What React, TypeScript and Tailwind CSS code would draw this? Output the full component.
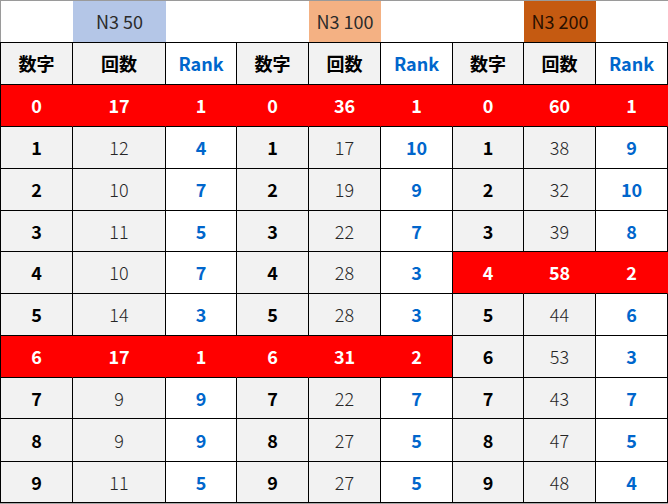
const font = { fontFamily: '"Noto Sans CJK JP", "Noto Sans", sans-serif' }

// 列幅（右罫線込み）
const colWidths = ['w-[72px]', 'w-[93px]', 'w-[71px]', 'w-[72px]', 'w-[72px]', 'w-[72px]', 'w-[71px]', 'w-[72px]', 'w-[72px]']
// 行の高さ（下罫線込み）
const rowHeights = ['h-[42px]', 'h-[42px]', 'h-[42px]', 'h-[41px]', 'h-[42px]', 'h-[42px]', 'h-[42px]', 'h-[41px]', 'h-[43px]', 'h-[41px]']

const sections = [
  {
    counts: [17, 12, 10, 11, 10, 14, 17, 9, 9, 11],
    ranks: [1, 4, 7, 5, 7, 3, 1, 9, 9, 5],
    red: [0, 6],
  },
  {
    counts: [36, 17, 19, 22, 28, 28, 31, 22, 27, 27],
    ranks: [1, 10, 9, 7, 3, 3, 2, 7, 5, 5],
    red: [0, 6],
  },
  {
    counts: [60, 38, 32, 39, 58, 44, 53, 43, 47, 48],
    ranks: [1, 9, 10, 8, 2, 6, 3, 7, 5, 4],
    red: [0, 4],
  },
]

function isRed(row: number, col: number) {
  if (col > 8) return false
  return sections[Math.floor(col / 3)].red.includes(row)
}

export default function App() {
  return (
    <div className="w-[668px] h-[504px] bg-[#a6a6a6] text-[18px]" style={font}>
      {/* タイトル行 */}
      <div className="flex h-[42px] bg-white border-t border-l border-[#9a9a9a]">
        <div className="w-[72px]" />
        <div className="w-[93px] bg-[#b4c6e7] flex items-center justify-center text-[18px] text-[#2b2b2b]">N3 50</div>
        <div className="w-[71px]" />
        <div className="w-[72px]" />
        <div className="w-[72px] bg-[#f4b183] flex items-center justify-center text-[18px] text-[#2b2b2b]">N3 100</div>
        <div className="w-[72px]" />
        <div className="w-[71px]" />
        <div className="w-[72px] bg-[#c55a11] flex items-center justify-center text-[18px] text-[#2a1000]">N3 200</div>
        <div className="w-[71px]" />
      </div>

      {/* 見出し行 */}
      <div className="flex h-[43px] border-t border-b border-l border-black bg-white">
        {colWidths.map((w, c) => {
          const kind = c % 3
          return (
            <div
              key={c}
              className={`${w} border-r border-black flex items-center justify-center font-bold ${
                kind === 2 ? 'bg-white text-[#0066cc]' : 'bg-[#f2f2f2] text-black'
              }`}
            >
              {kind === 0 ? '数字' : kind === 1 ? '回数' : 'Rank'}
            </div>
          )
        })}
      </div>

      {/* データ行 */}
      {rowHeights.map((h, r) => (
        <div key={r} className={`flex ${h} border-l border-black`}>
          {colWidths.map((w, c) => {
            const sec = sections[Math.floor(c / 3)]
            const kind = c % 3
            const red = isRed(r, c)
            const rightRed = red && (isRed(r, c + 1) || c === 8)
            let cls = ''
            let text: string | number = ''
            if (kind === 0) {
              text = r
              cls = red ? 'bg-[#ff0000] text-white font-bold' : 'bg-[#f2f2f2] text-black font-bold'
            } else if (kind === 1) {
              text = sec.counts[r]
              cls = red ? 'bg-[#ff0000] text-white font-bold' : 'bg-[#f2f2f2] text-[#262626] font-light'
            } else {
              text = sec.ranks[r]
              cls = red ? 'bg-[#ff0000] text-white font-bold' : 'bg-white text-[#0066cc] font-bold'
            }
            return (
              <div
                key={c}
                className={`${w} border-b border-r ${rightRed ? 'border-r-[#ff0000]' : 'border-r-black'} border-b-black flex items-center justify-center ${cls}`}
              >
                {text}
              </div>
            )
          })}
        </div>
      ))}
    </div>
  )
}
